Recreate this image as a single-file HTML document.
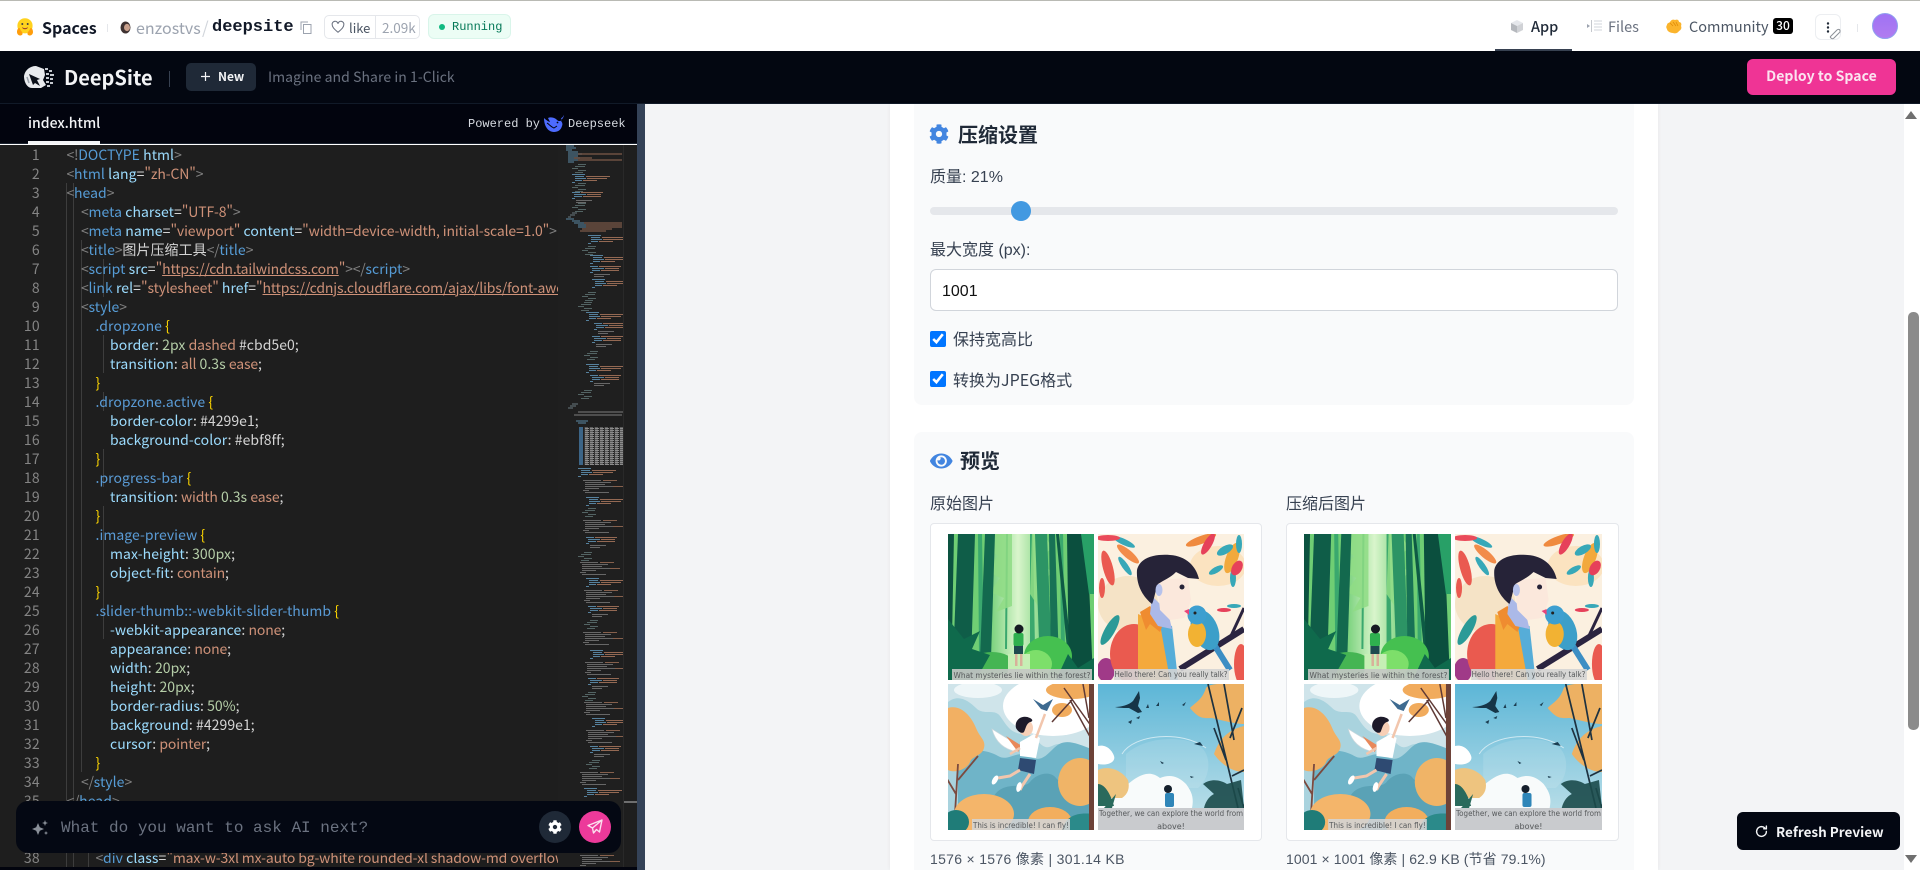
<!DOCTYPE html>
<html lang="zh-CN">
<head>
<meta charset="utf-8">
<title>DeepSite</title>
<style>
*{box-sizing:border-box}
html,body{margin:0;padding:0;width:1920px;height:870px;overflow:hidden;background:#fff}
body{font-family:"Noto Sans CJK SC","Liberation Sans",sans-serif;position:relative}
.a{position:absolute}
.t{position:absolute;white-space:pre}
.m{font-family:"Liberation Mono","DejaVu Sans Mono",monospace}
.cn{font-family:"Liberation Sans","Noto Sans CJK SC",sans-serif}
#code{position:absolute;left:66.5px;top:145.5px;width:491.5px;height:721.5px;overflow:hidden;font:14px/19px "Noto Sans CJK SC","Liberation Sans",sans-serif;color:#d4d4d4;letter-spacing:.05px}
#code div{height:19px;white-space:pre}
.i1{padding-left:14.5px}.i2{padding-left:29px}.i3{padding-left:43.5px}
.p{color:#808080;letter-spacing:-.3px}.g{color:#569cd6}.r{color:#9cdcfe}.s{color:#ce9178;letter-spacing:-.15px}.u{color:#ce9178;text-decoration:underline}
.c{color:#5a9bd5}.b{color:#ffd700}.n{color:#b5cea8}
#nums{position:absolute;left:0;top:145.5px;width:40px;height:721.5px;overflow:hidden;text-align:right;font:14px/19px "Noto Sans CJK SC","Liberation Sans",sans-serif;color:#858585;letter-spacing:.3px}
</style>
</head>
<body>
<!-- top bar -->
<div class="a" style="left:0;top:0;width:1920px;height:51px;background:#fff;border-top:1px solid #b9bab4"></div>
<svg class="a" style="left:16px;top:18px" width="18" height="18" viewBox="0 0 18 18"><circle cx="9" cy="7.800" r="7.600" fill="#ffd21e"/><path d="M1 14c0-2 1-4 2-4s1 1 1.500 2 1.500 1.500 2 3-1 2.500-2.500 2.500S1 16 1 14zM17 14c0-2-1-4-2-4s-1 1-1.500 2-1.500 1.500-2 3 1 2.500 2.500 2.500 3-1.500 3-3.500z" fill="#ff9d0b"/><circle cx="6.300" cy="6" r="1" fill="#3a3b45"/><circle cx="11.700" cy="6" r="1" fill="#3a3b45"/><path d="M6 9c1.800 1.500 4.200 1.500 6 0-.5 3-5.500 3-6 0z" fill="#a0402a"/></svg>
<div class="t" style="left:42px;top:15px;font-size:16px;line-height:24px;font-weight:700;color:#111827">Spaces</div>
<div class="a" style="left:107px;top:24px;width:1px;height:8px;background:#e5e7eb"></div>
<svg class="a" style="left:120px;top:21px" width="11" height="13" viewBox="0 0 11 13"><ellipse cx="5.500" cy="6.500" rx="5" ry="6" fill="#3f3231"/><ellipse cx="7" cy="6.500" rx="3" ry="3.600" fill="#c9a08c"/></svg>
<div class="t" style="left:136px;top:14px;font-size:16px;line-height:26px;color:#9ca3af">enzostvs</div>
<div class="t" style="left:202px;top:14px;font-size:17px;line-height:26px;color:#d1d5db">/</div>
<div class="t m" style="left:212px;top:15px;font-size:17px;line-height:26px;font-weight:700;color:#111827">deepsite</div>
<svg class="a" style="left:300px;top:21px" width="12" height="13" viewBox="0 0 12 13" fill="none" stroke="#9ca3af" stroke-width="1"><path d="M1 9V1h7"/><rect x="3.500" y="3.500" width="7.500" height="9" fill="#fff"/></svg>
<div class="a" style="left:324px;top:15px;width:96px;height:24px;border:1px solid #e5e7eb;border-radius:5px"></div>
<div class="a" style="left:375px;top:15px;width:1px;height:24px;background:#e5e7eb"></div>
<svg class="a" style="left:331px;top:20px" width="14" height="14" viewBox="0 0 24 24" fill="none" stroke="#6b7280" stroke-width="1.800"><path d="M12 21C5 15 2 12 2 8a5 5 0 0 1 10-1.500A5 5 0 0 1 22 8c0 4-3 7-10 13z"/></svg>
<div class="t" style="left:349px;top:17px;font-size:13px;line-height:21px;color:#4b5563">like</div>
<div class="t" style="left:382px;top:17px;font-size:13.500px;line-height:21px;color:#9ca3af">2.09k</div>
<div class="a" style="left:428px;top:14px;width:83px;height:25px;background:#ecfdf5;border:1px solid #d9f5ea;border-radius:6px"></div>
<div class="a" style="left:439px;top:24px;width:6px;height:6px;border-radius:50%;background:#10b981"></div>
<div class="t m" style="left:452px;top:19px;font-size:12px;line-height:16px;color:#047857">Running</div>

<svg class="a" style="left:1510px;top:19px" width="14" height="15" viewBox="0 0 14 15"><path d="M7 1l6 3-6 3-6-3z" fill="#e5e7eb"/><path d="M1 4l6 3v7l-6-3z" fill="#b5b8bd"/><path d="M13 4l-6 3v7l6-3z" fill="#d0d2d6"/></svg>
<div class="t" style="left:1531px;top:15px;font-size:14.500px;line-height:24px;font-weight:500;color:#1f2937">App</div>
<div class="a" style="left:1495px;top:49px;width:77px;height:2px;background:#374151"></div>
<svg class="a" style="left:1587px;top:20px" width="15" height="12" viewBox="0 0 15 12"><path d="M0 4l3 2-3 2z" fill="#9ca3af"/><path d="M4.500 0v12" stroke="#c5c8cd" stroke-width="1"/><path d="M7 1h8M7 4h8M7 7h8M7 10h8" stroke="#d1d5db" stroke-width="1"/></svg>
<div class="t" style="left:1608px;top:15px;font-size:14.500px;line-height:24px;color:#6b7280">Files</div>
<svg class="a" style="left:1666px;top:19px" width="16" height="15" viewBox="0 0 16 15"><path d="M1 6c0-2 2-2 3-3 1-2 3-3 5-2 2-1 4 0 4 2 2 0 3 2 2 4 1 2 0 4-2 5-1 2-4 3-6 2-3 0-6-2-6-4-1-1-1-3 0-4z" fill="#fbb42c"/><path d="M4 4l3 3M7 3l3 4M10 3l2 4" stroke="#e08c0a" stroke-width=".8"/></svg>
<div class="t" style="left:1689px;top:15px;font-size:14.500px;line-height:24px;color:#4b5563">Community</div>
<div class="t" style="left:1773px;top:18px;width:20px;height:16px;background:#000;border-radius:3px;color:#fff;font-size:12px;line-height:16px;text-align:center;font-weight:500">30</div>
<div class="a" style="left:1815px;top:14px;width:26px;height:26px;border:1px solid #eceef1;border-radius:6px;background:#fff"></div>
<svg class="a" style="left:1826px;top:22px" width="4" height="11" viewBox="0 0 4 11"><circle cx="2" cy="1.500" r="1.200" fill="#1f2937"/><circle cx="2" cy="5.500" r="1.200" fill="#1f2937"/><circle cx="2" cy="9.500" r="1.200" fill="#1f2937"/></svg>
<svg class="a" style="left:1829px;top:28px" width="13" height="13" viewBox="0 0 13 13" fill="#fff" stroke="#8b9097" stroke-width="1"><path d="M2 8l6-6c1-1 3-1 3 1s0 1-1 2l-5 5c-1 1-2 1-3 0s-1-1 0-2l5-5"/></svg>
<div class="a" style="left:1857px;top:24px;width:1px;height:8px;background:#e5e7eb"></div>
<div class="a" style="left:1872px;top:13px;width:26px;height:26px;border-radius:50%;background:linear-gradient(180deg,#9f72f4,#b07cf0);border:1px solid #8fa0ee"></div>

<!-- dark header -->
<div class="a" style="left:0;top:51px;width:1920px;height:53px;background:#030711;border-bottom:1px solid #111a28"></div>
<svg class="a" style="left:23px;top:64px" width="33" height="25" viewBox="0 0 33 25"><path d="M1 12C2 6 7 2 13 2l8 3 1 6-2 5 3 5-5 3H9C4 24 1 18 1 12z" fill="#e8eaed"/><path d="M6 10l11 5-3 1 3 6-5-3-2 2z" fill="#0b0f19"/><path d="M4 13l2 6" stroke="#9aa1ab" stroke-width="1.500"/><path d="M22 4h3v2h-3zM26 6h3v2h-3zM23 9h3v2h-3zM27 10h4v2h-4zM23 13h3v2h-3zM27 14h3v2h-3zM23 17h3v2h-3zM27 18h3v2h-3zM24 21h3v2h-3z" fill="#c5c9cf"/></svg>
<div class="t" style="left:64px;top:62px;font-size:20px;line-height:30px;font-weight:700;color:#f3f4f6">DeepSite</div>
<div class="a" style="left:169px;top:71px;width:1px;height:16px;background:#374151"></div>
<div class="a" style="left:186px;top:63px;width:70px;height:28px;background:#1f2937;border-radius:5px"></div>
<svg class="a" style="left:200px;top:71px" width="11" height="11" viewBox="0 0 11 11"><path d="M5.500 1v9M1 5.500h9" stroke="#f3f4f6" stroke-width="1.200"/></svg>
<div class="t" style="left:218px;top:67px;font-size:12px;line-height:20px;font-weight:700;color:#f3f4f6">New</div>
<div class="t" style="left:268px;top:66px;font-size:14px;line-height:22px;color:#6b7280;letter-spacing:.06px">Imagine and Share in 1-Click</div>
<div class="a" style="left:1747px;top:59px;width:149px;height:36px;background:#ef3495;border-radius:6px"></div>
<div class="t" style="left:1747px;top:59px;width:149px;text-align:center;font-size:14px;line-height:35px;font-weight:700;color:#fbe4f0;letter-spacing:.05px">Deploy to Space</div>

<!-- editor -->
<div class="a" style="left:0;top:104px;width:637px;height:40px;background:#02040e;border-bottom:1px solid #1c2430"></div>
<div class="t" style="left:28px;top:113px;font-size:14px;line-height:21px;font-weight:500;color:#f3f4f6">index.html</div>
<div class="a" style="left:28px;top:141px;width:72px;height:3px;background:#f3f4f6"></div>
<div class="t m" style="left:468px;top:117px;font-size:12px;line-height:14px;color:#d8dce2">Powered by</div>
<svg class="a" style="left:544px;top:115px" width="20" height="17" viewBox="0 0 20 17"><path d="M20 0c-1 2-2 3-3 3l1 2c-1 1-2 1-3 1-1 0-2-1-3-2C9 2 6 2 4 3L6 7C5 7 2 5 0 3c0 8 4 14 10 14 4 0 7-2 8-6 1-2 0-4-1-5 1-2 3-4 3-6z" fill="#4d6bfe"/><path d="M3 8c2 1 4 4 7 5l3-2" stroke="#02040e" stroke-width="1" fill="none"/><circle cx="13.500" cy="7.500" r=".9" fill="#02040e"/></svg>
<div class="t m" style="left:568px;top:117px;font-size:12px;line-height:14px;color:#d8dce2">Deepseek</div>

<div class="a" style="left:0;top:145px;width:637px;height:722px;background:#1e1e1e"></div>
<div class="a" style="left:0;top:867px;width:645px;height:3px;background:#02040e"></div>
<div class="a" style="left:558px;top:145px;width:65px;height:722px;background:#1f1f1f"></div>
<div class="a" style="left:623px;top:145px;width:1px;height:722px;background:#292929"></div>
<div class="a" style="left:624px;top:801px;width:13px;height:2px;background:#6e6e6e"></div>
<div class="a" style="left:637px;top:104px;width:8px;height:766px;background:#344257"></div>

<!-- indent guides -->
<svg class="a" style="left:0;top:145px" width="120" height="722" viewBox="0 145 120 722" stroke="#3d3d3d" stroke-width="1" shape-rendering="crispEdges">
<path d="M66.500 183V867M73.500 183V867M81.500 240V772M103.500 259V297M103.500 335V373M103.500 392V411M103.500 449V487M103.500 506V639M88.500 830V867"/>
</svg>

<div id="nums">1
<br>2<br>3<br>4<br>5<br>6<br>7<br>8<br>9<br>10<br>11<br>12<br>13<br>14<br>15<br>16<br>17<br>18<br>19<br>20<br>21<br>22<br>23<br>24<br>25<br>26<br>27<br>28<br>29<br>30<br>31<br>32<br>33<br>34<br>35<br>36<br>37<br>38</div>

<div id="code">
<div><span class="p">&lt;!</span><span class="g">DOCTYPE</span> <span class="r">html</span><span class="p">&gt;</span></div>
<div><span class="p">&lt;</span><span class="g">html</span> <span class="r">lang</span>=<span class="s">"zh-CN"</span><span class="p">&gt;</span></div>
<div><span class="p">&lt;</span><span class="g">head</span><span class="p">&gt;</span></div>
<div class="i1"><span class="p">&lt;</span><span class="g">meta</span> <span class="r">charset</span>=<span class="s">"UTF-8"</span><span class="p">&gt;</span></div>
<div class="i1"><span class="p">&lt;</span><span class="g">meta</span> <span class="r">name</span>=<span class="s">"viewport"</span> <span class="r">content</span>=<span class="s">"width=device-width, initial-scale=1.0"</span><span class="p">&gt;</span></div>
<div class="i1"><span class="p">&lt;</span><span class="g">title</span><span class="p">&gt;</span>图片压缩工具<span class="p">&lt;/</span><span class="g">title</span><span class="p">&gt;</span></div>
<div class="i1"><span class="p">&lt;</span><span class="g">script</span> <span class="r">src</span>=<span class="s">"<span class="u">https://cdn.tailwindcss.com</span>"</span><span class="p">&gt;&lt;/</span><span class="g">script</span><span class="p">&gt;</span></div>
<div class="i1"><span class="p">&lt;</span><span class="g">link</span> <span class="r">rel</span>=<span class="s">"stylesheet"</span> <span class="r">href</span>=<span class="s">"<span class="u">https://cdnjs.cloudflare.com/ajax/libs/font-awesome/6.4.0/css/all.min.css</span>"</span><span class="p">&gt;</span></div>
<div class="i1"><span class="p">&lt;</span><span class="g">style</span><span class="p">&gt;</span></div>
<div class="i2"><span class="c">.dropzone</span> <span class="b">{</span></div>
<div class="i3"><span class="r">border</span>: <span class="n">2px</span> <span class="s">dashed</span> #cbd5e0;</div>
<div class="i3"><span class="r">transition</span>: <span class="s">all</span> <span class="n">0.3s</span> <span class="s">ease</span>;</div>
<div class="i2"><span class="b">}</span></div>
<div class="i2"><span class="c">.dropzone.active</span> <span class="b">{</span></div>
<div class="i3"><span class="r">border-color</span>: #4299e1;</div>
<div class="i3"><span class="r">background-color</span>: #ebf8ff;</div>
<div class="i2"><span class="b">}</span></div>
<div class="i2"><span class="c">.progress-bar</span> <span class="b">{</span></div>
<div class="i3"><span class="r">transition</span>: <span class="s">width</span> <span class="n">0.3s</span> <span class="s">ease</span>;</div>
<div class="i2"><span class="b">}</span></div>
<div class="i2"><span class="c">.image-preview</span> <span class="b">{</span></div>
<div class="i3"><span class="r">max-height</span>: <span class="n">300px</span>;</div>
<div class="i3"><span class="r">object-fit</span>: <span class="s">contain</span>;</div>
<div class="i2"><span class="b">}</span></div>
<div class="i2"><span class="c">.slider-thumb::-webkit-slider-thumb</span> <span class="b">{</span></div>
<div class="i3"><span class="r">-webkit-appearance</span>: <span class="s">none</span>;</div>
<div class="i3"><span class="r">appearance</span>: <span class="s">none</span>;</div>
<div class="i3"><span class="r">width</span>: <span class="n">20px</span>;</div>
<div class="i3"><span class="r">height</span>: <span class="n">20px</span>;</div>
<div class="i3"><span class="r">border-radius</span>: <span class="n">50%</span>;</div>
<div class="i3"><span class="r">background</span>: #4299e1;</div>
<div class="i3"><span class="r">cursor</span>: <span class="s">pointer</span>;</div>
<div class="i2"><span class="b">}</span></div>
<div class="i1"><span class="p">&lt;/</span><span class="g">style</span><span class="p">&gt;</span></div>
<div><span class="p">&lt;/</span><span class="g">head</span><span class="p">&gt;</span></div>
<div><span class="p">&lt;</span><span class="g">body</span> <span class="r">class</span>=<span class="s">"bg-gray-100 min-h-screen"</span><span class="p">&gt;</span></div>
<div class="i1"><span class="p">&lt;</span><span class="g">div</span> <span class="r">class</span>=<span class="s">"container mx-auto px-4 py-8"</span><span class="p">&gt;</span></div>
<div class="i2"><span class="p">&lt;</span><span class="g">div</span> <span class="r">class</span>=<span class="s">"max-w-3xl mx-auto bg-white rounded-xl shadow-md overflow-hidden"</span><span class="p">&gt;</span></div>
</div>

<!-- minimap -->
<svg class="a" style="left:559px;top:145px" width="64" height="722" viewBox="559 145 64 722" fill="none">
<defs>
<pattern id="dn" width="5" height="2" patternUnits="userSpaceOnUse"><rect width="4" height="1" fill="#8c8c8c"/><rect x="4" width="1" height="2" fill="#333"/><rect y="1" width="3" height="1" fill="#5c5c5c"/></pattern>
<g id="b1"><path d="M0 .5h13M3 2.500h9M3 4.500h11M3 6.500h7M0 8.500h3" stroke="#6aa3c8" stroke-opacity=".75"/><path d="M14 2.500h24M15 4.500h20M11 6.500h14" stroke="#b27c60" stroke-opacity=".8"/></g>
<g id="b2"><path d="M0 .5h8M2 2.500h12M2 4.500h8M0 6.500h3" stroke="#6aa3c8" stroke-opacity=".75"/><path d="M9 .5h22M15 2.500h14M11 4.500h18" stroke="#b27c60" stroke-opacity=".8"/><path d="M4 8.500h16M4 10.500h10" stroke="#9a9a9a" stroke-opacity=".6"/></g>
<g id="b3"><path d="M6 .5h8M3 2.500h10M0 4.500h6M6 6.500h8M3 8.500h8" stroke="#8aa" stroke-opacity=".5"/></g>
<g id="b4"><path d="M0 .5h18M2 2.500h26M2 4.500h20M2 6.500h28M2 8.500h14M0 10.500h6M2 12.500h24" stroke="#a2a2a2" stroke-opacity=".55"/><path d="M20 .5h14M30 6.500h10" stroke="#b27c60" stroke-opacity=".7"/></g>
</defs>
<path d="M566 146h8M566 148h10M566 150h6M568 152h10M568 154h14M568 156h10M568 158h12M568 160h10M568 162h6" stroke="#6aa3c8" stroke-opacity=".8"/>
<path d="M578 154h44M574 158h18M578 160h44" stroke="#b27c60" stroke-opacity=".8"/>
<use href="#b3" x="572" y="164"/><use href="#b1" x="572" y="174"/><use href="#b3" x="572" y="183"/><use href="#b2" x="572" y="192"/><use href="#b3" x="572" y="203"/>
<path d="M572 213h5M570 215h5M568 217h3" stroke="#8a9ea8" stroke-opacity=".7"/>
<path d="M566 219h8M572 221h8M574 223h10M578 225h8M578 227h8" stroke="#6aa3c8" stroke-opacity=".8"/>
<path d="M584 223h38M586 225h36M586 227h36M582 229h30M580 231h26" stroke="#b27c60" stroke-opacity=".8"/>
<use href="#b1" x="588" y="235"/><use href="#b3" x="582" y="246"/><use href="#b1" x="590" y="255"/><use href="#b2" x="590" y="266"/><use href="#b1" x="592" y="279"/><use href="#b3" x="582" y="292"/><use href="#b3" x="578" y="302"/><use href="#b1" x="586" y="312"/><use href="#b2" x="594" y="323"/><use href="#b2" x="592" y="336"/><use href="#b3" x="584" y="351"/><use href="#b1" x="586" y="364"/><use href="#b2" x="590" y="375"/><use href="#b3" x="578" y="390"/>
<path d="M572 404h6M570 406h6M568 408h5" stroke="#8a9ea8" stroke-opacity=".7"/>
<path d="M578 412h45M574 415h48" stroke="#a6a6a6" stroke-opacity=".7"/>
<path d="M576 421h12M578 423h8" stroke="#6aa3c8" stroke-opacity=".8"/>
<rect x="579" y="427" width="4" height="38" fill="#3c6587"/>
<rect x="584" y="427" width="39" height="38" fill="url(#dn)"/>
<use href="#b1" x="578" y="468"/><use href="#b4" x="583" y="480"/><use href="#b1" x="586" y="497"/><use href="#b3" x="582" y="508"/><use href="#b4" x="583" y="520"/><use href="#b2" x="586" y="537"/><use href="#b3" x="578" y="552"/><use href="#b4" x="580" y="562"/><use href="#b1" x="586" y="578"/><use href="#b4" x="584" y="590"/><use href="#b2" x="588" y="606"/><use href="#b3" x="584" y="620"/><use href="#b4" x="583" y="632"/><use href="#b1" x="590" y="650"/><use href="#b4" x="585" y="662"/><use href="#b2" x="588" y="678"/><use href="#b3" x="582" y="692"/><use href="#b4" x="584" y="702"/><use href="#b1" x="592" y="718"/><use href="#b4" x="586" y="730"/><use href="#b2" x="590" y="746"/><use href="#b3" x="586" y="760"/><use href="#b4" x="580" y="772"/><use href="#b1" x="584" y="788"/><use href="#b4" x="580" y="855"/>
</svg>

<!-- chat box -->
<div class="a" style="left:16px;top:801px;width:605px;height:52px;background:#040813;border-radius:12px"></div>
<svg class="a" style="left:32px;top:820px" width="17" height="17" viewBox="0 0 17 17"><path d="M6 3l1.800 4.200L12 9l-4.200 1.800L6 15l-1.800-4.200L0 9l4.200-1.800z" fill="#8a9099"/><path d="M13 0l.8 2.200L16 3l-2.200.8L13 6l-.8-2.200L10 3l2.200-.8zM14 11l.6 1.400L16 13l-1.400.6L14 15l-.6-1.400L12 13l1.400-.6z" fill="#8a9099"/></svg>
<div class="t m" style="left:61px;top:818px;font-size:16px;line-height:21px;color:#6b7280">What do you want to ask AI next?</div>
<div class="a" style="left:539px;top:811px;width:32px;height:32px;border-radius:50%;background:#1f2937"></div>
<svg class="a" style="left:548px;top:820px" width="14" height="14" viewBox="0 0 512 512"><path fill="#fff" d="M487.400 315.700l-42.600-24.600c4.300-23.200 4.300-47 0-70.200l42.600-24.600c4.900-2.800 7.100-8.600 5.500-14-11.100-35.600-30-67.800-54.700-94.600-3.800-4.100-10-5.100-14.800-2.300L380.800 110c-17.900-15.400-38.500-27.300-60.800-35.100V25.800c0-5.600-3.900-10.500-9.400-11.700-36.700-8.200-74.300-7.800-109.200 0-5.500 1.200-9.400 6.100-9.400 11.700V75c-22.200 7.900-42.800 19.800-60.800 35.100L88.700 85.500c-4.900-2.800-11-1.900-14.800 2.300-24.700 26.700-43.600 58.900-54.700 94.600-1.700 5.400.6 11.200 5.500 14L67.300 221c-4.300 23.200-4.300 47 0 70.200l-42.600 24.600c-4.900 2.800-7.100 8.600-5.500 14 11.100 35.600 30 67.800 54.700 94.600 3.800 4.100 10 5.100 14.800 2.300l42.600-24.600c17.900 15.400 38.500 27.300 60.800 35.100v49.200c0 5.600 3.900 10.500 9.400 11.700 36.700 8.200 74.300 7.800 109.200 0 5.500-1.200 9.400-6.100 9.400-11.700v-49.200c22.200-7.900 42.800-19.800 60.800-35.100l42.600 24.600c4.900 2.800 11 1.900 14.800-2.300 24.700-26.700 43.600-58.900 54.700-94.600 1.500-5.500-.7-11.300-5.600-14.100zM256 336c-44.100 0-80-35.900-80-80s35.900-80 80-80 80 35.900 80 80-35.900 80-80 80z"/></svg>
<div class="a" style="left:579px;top:811px;width:32px;height:32px;border-radius:50%;background:#ec3a9a"></div>
<svg class="a" style="left:587px;top:819px" width="16" height="16" viewBox="0 0 16 16" fill="none" stroke="#fbe0ee" stroke-width="1.400" stroke-linejoin="round"><path d="M15 1L1 6.500 5.500 9 6.500 14 9.500 10.500 12.500 13zM15 1L5.500 9"/></svg>

<!-- preview -->
<div class="a" style="left:645px;top:104px;width:1259px;height:766px;background:#f3f4f6"></div>
<div class="a" style="left:890px;top:104px;width:768px;height:766px;background:#fff;box-shadow:0 0 4px rgba(0,0,0,.06)"></div>
<div class="a" style="left:914px;top:104px;width:720px;height:301px;background:#f9fafb;border-radius:0 0 8px 8px"></div>
<svg class="a" style="left:929px;top:124px" width="20" height="20" viewBox="0 0 512 512"><path fill="#4285e0" d="M487.400 315.700l-42.600-24.600c4.300-23.200 4.300-47 0-70.200l42.600-24.600c4.900-2.800 7.100-8.600 5.500-14-11.100-35.600-30-67.800-54.700-94.600-3.800-4.100-10-5.100-14.800-2.300L380.800 110c-17.900-15.400-38.500-27.300-60.800-35.100V25.800c0-5.600-3.900-10.500-9.400-11.700-36.700-8.200-74.300-7.800-109.200 0-5.500 1.200-9.400 6.100-9.400 11.700V75c-22.200 7.900-42.800 19.800-60.800 35.100L88.700 85.500c-4.900-2.800-11-1.900-14.800 2.300-24.700 26.700-43.600 58.900-54.700 94.600-1.700 5.400.6 11.200 5.500 14L67.300 221c-4.300 23.200-4.300 47 0 70.200l-42.600 24.600c-4.900 2.800-7.100 8.600-5.500 14 11.100 35.600 30 67.800 54.700 94.600 3.800 4.100 10 5.100 14.800 2.300l42.600-24.600c17.900 15.400 38.500 27.300 60.800 35.100v49.200c0 5.600 3.900 10.500 9.400 11.700 36.700 8.200 74.300 7.800 109.200 0 5.500-1.200 9.400-6.100 9.400-11.700v-49.200c22.200-7.900 42.800-19.800 60.800-35.100l42.600 24.600c4.900 2.800 11 1.900 14.800-2.300 24.700-26.700 43.600-58.900 54.700-94.600 1.500-5.500-.7-11.300-5.600-14.100zM256 336c-44.100 0-80-35.900-80-80s35.900-80 80-80 80 35.900 80 80-35.900 80-80 80z"/></svg>
<div class="t cn" style="left:958px;top:121px;font-size:20px;line-height:30px;font-weight:700;color:#1f2937">压缩设置</div>
<div class="t cn" style="left:930px;top:166px;font-size:16px;line-height:24px;color:#374151">质量: 21%</div>
<div class="a" style="left:930px;top:207px;width:688px;height:8px;background:#e5e7eb;border-radius:4px"></div>
<div class="a" style="left:1011px;top:201px;width:20px;height:20px;background:#4299e1;border-radius:50%"></div>
<div class="t cn" style="left:930px;top:239px;font-size:16px;line-height:24px;color:#374151">最大宽度 (px):</div>
<div class="a" style="left:930px;top:269px;width:688px;height:42px;background:#fff;border:1px solid #d1d5db;border-radius:6px"></div>
<div class="t cn" style="left:942px;top:280px;font-size:16px;line-height:24px;color:#111">1001</div>
<input class="a" type="checkbox" checked style="left:930px;top:331px;width:16px;height:16px;margin:0">
<div class="t cn" style="left:953px;top:328.500px;font-size:16px;line-height:24px;color:#374151">保持宽高比</div>
<input class="a" type="checkbox" checked style="left:930px;top:371px;width:16px;height:16px;margin:0">
<div class="t cn" style="left:953px;top:366.500px;font-size:16px;line-height:24px;color:#374151">转换为<span style="font-family:'Noto Sans CJK SC',sans-serif">JPEG</span>格式</div>

<div class="a" style="left:914px;top:432px;width:720px;height:438px;background:#f9fafb;border-radius:8px 8px 0 0"></div>
<svg class="a" style="left:930px;top:451px" width="22.500" height="20" viewBox="0 0 576 512"><path fill="#4285e0" d="M572.520 241.400C518.290 135.590 410.930 64 288 64S57.680 135.640 3.480 241.410a32.350 32.350 0 0 0 0 29.190C57.710 376.410 165.070 448 288 448s230.320-71.640 284.520-177.410a32.350 32.350 0 0 0 0-29.190zM288 400a144 144 0 1 1 144-144 143.930 143.930 0 0 1-144 144zm0-240a95.310 95.310 0 0 0-25.310 3.790 47.850 47.850 0 0 1-66.900 66.900A95.780 95.780 0 1 0 288 160z"/></svg>
<div class="t cn" style="left:960px;top:447px;font-size:20px;line-height:30px;font-weight:700;color:#1f2937">预览</div>
<div class="t cn" style="left:930px;top:493px;font-size:16px;line-height:24px;color:#374151">原始图片</div>
<div class="t cn" style="left:1286px;top:493px;font-size:16px;line-height:24px;color:#374151">压缩后图片</div>
<div class="a" style="left:930px;top:523px;width:332px;height:318px;background:#fff;border:1px solid #e5e7eb;border-radius:4px"></div>
<div class="a" style="left:1286px;top:523px;width:333px;height:318px;background:#fff;border:1px solid #e5e7eb;border-radius:4px"></div>

<svg width="0" height="0" style="position:absolute">
<defs>
<linearGradient id="g1" x1="0" x2="1" y1="0" y2="0"><stop offset="0" stop-color="#6fce74"/><stop offset=".5" stop-color="#d9f5cc"/><stop offset="1" stop-color="#6fce74"/></linearGradient>
<linearGradient id="g4" x1="0" x2="0" y1="0" y2="1"><stop offset="0" stop-color="#5cb6d7"/><stop offset="1" stop-color="#c5e3ea"/></linearGradient>
<clipPath id="ct"><rect width="146" height="146"/></clipPath>
<symbol id="art" viewBox="0 0 296 296">
<!-- tile 1 forest -->
<g clip-path="url(#ct)">
<rect width="146" height="146" fill="#6fce74"/>
<rect x="40" width="60" height="146" fill="url(#g1)"/>
<path d="M18 0h6l-2 120h-5zM30 0h4l2 120h-5zM58 0h2l-1 115h-2zM82 0h3l2 115h-5zM112 0h3l2 115h-4z" fill="#3aa86e"/>
<path d="M46 0l-8 14 12 8-12 14 14 8-10 14 14 6-8 14 16-6V0zM96 0l8 14-14 12 14 12-12 14 10 10-12 10-8-12 2-60z" fill="#8fdc85" opacity=".85"/>
<path d="M87 0h12l5 132H92z" fill="#2c9465"/>
<path d="M37 0h10l-4 124H32z" fill="#13694e"/>
<path d="M101 0h6l4 132h-8z" fill="#187255"/>
<path d="M108 0h3l13 125h-4z" fill="#0e5a45"/>
<path d="M10 0h17l-4 130H5z" fill="#0f5d48"/>
<path d="M0 0h6L4 105H0z" fill="#0c5240"/>
<path d="M119 0h20l6 146h-24z" fill="#0b4f3e"/>
<path d="M128 0h5l8 60h13V0z" fill="#28a067"/>
<ellipse cx="100" cy="122" rx="24" ry="20" fill="#45c050"/>
<ellipse cx="88" cy="130" rx="16" ry="14" fill="#7ddf6a"/>
<ellipse cx="44" cy="130" rx="22" ry="12" fill="#45b553"/>
<rect x="60" y="120" width="22" height="26" fill="#c6efb5"/>
<path d="M0 85l16 20 16-8-8 18 18 6-14 25H0z" fill="#0f6a4c"/>
<path d="M108 146l12-26 10 14 16-10v22z" fill="#0f6a4c"/>
<rect x="67" y="116" width="2.500" height="16" fill="#d8b09a"/><rect x="72" y="116" width="2.500" height="16" fill="#d8b09a"/>
<rect x="66" y="111" width="9" height="9" fill="#1e4a4f"/>
<rect x="65.500" y="99" width="10" height="13" rx="2" fill="#2fb04f"/>
<circle cx="71" cy="95" r="4.500" fill="#161a22"/>
<rect x="4" y="135" width="140" height="11" fill="#c4c8c4" opacity=".92"/>
</g>
<!-- tile 2 boy and bird -->
<g transform="translate(150)" clip-path="url(#ct)">
<rect width="146" height="146" fill="#fbf0e0"/>
<ellipse cx="30" cy="70" rx="30" ry="28" fill="#f5e3c6"/>
<ellipse cx="120" cy="32" rx="28" ry="20" fill="#fbe3c0"/>
<g>
<ellipse cx="10" cy="34" rx="5" ry="18" transform="rotate(-15 10 34)" fill="#ea5a50"/>
<ellipse cx="30" cy="20" rx="4" ry="14" transform="rotate(-50 30 20)" fill="#f28c4a"/>
<ellipse cx="26" cy="8" rx="3" ry="12" transform="rotate(-65 26 8)" fill="#37a8b8"/>
<ellipse cx="10" cy="4" rx="12" ry="3" fill="#ea4b5a"/>
<ellipse cx="27" cy="32" rx="3" ry="11" transform="rotate(-35 27 32)" fill="#37a8b8"/>
<ellipse cx="4" cy="54" rx="3" ry="10" fill="#ea5a50"/>
<ellipse cx="103" cy="6" rx="16" ry="4" transform="rotate(-20 103 6)" fill="#ef8a3f"/>
<ellipse cx="110" cy="10" rx="4" ry="12" transform="rotate(30 110 10)" fill="#e6415a"/>
<ellipse cx="134" cy="24" rx="6" ry="16" transform="rotate(20 134 24)" fill="#f2a93c"/>
<ellipse cx="127" cy="16" rx="4" ry="9" transform="rotate(60 127 16)" fill="#37a8b8"/>
<ellipse cx="141" cy="10" rx="3" ry="9" fill="#37a8b8"/>
<ellipse cx="118" cy="36" rx="3" ry="8" transform="rotate(60 118 36)" fill="#37a8b8"/>
<ellipse cx="135" cy="44" rx="3" ry="9" fill="#37a8b8"/>
<ellipse cx="139" cy="34" rx="5" ry="8" transform="rotate(30 139 34)" fill="#e6415a"/>
<ellipse cx="126" cy="76" rx="7" ry="2" fill="#e6415a"/>
<ellipse cx="136" cy="72" rx="7" ry="2" fill="#37a8b8"/>
<ellipse cx="12" cy="96" rx="5" ry="17" transform="rotate(30 12 96)" fill="#2b9a97"/>
<ellipse cx="24" cy="114" rx="4" ry="13" transform="rotate(60 24 114)" fill="#2b9a97"/>
<ellipse cx="8" cy="136" rx="9" ry="12" fill="#a03a88"/>
<ellipse cx="143" cy="130" rx="7" ry="20" fill="#ea5a50"/>
</g>
<ellipse cx="36" cy="120" rx="24" ry="30" fill="#ea5a4f"/>
<path d="M40 80l30 14 8 52H40z" fill="#f4a93c"/>
<path d="M62 90l12 2 6 54H72z" fill="#56add8"/>
<path d="M42 78l10-6 14 16-4 10-10-8-4 6z" fill="#ef8c30"/>
<path d="M54 62l16 16 4 17-14-3-8-12z" fill="#abb9e8"/>
<path d="M59 46l31-2c1 8 2 14 3 22l-2 6-1 6-4 6-14 2-10-10z" fill="#fbe8dc"/>
<path d="M39 36c3-14 21-16 33-15 16 1 26 11 29 24l-11-1-12-6c-6 6-12 8-18 12-3 8-4 16-6 20C44 62 38 50 39 36z" fill="#262338"/>
<ellipse cx="61" cy="56" rx="3.500" ry="6" fill="#b6c2ec"/>
<circle cx="84" cy="53" r="2.500" fill="#272338"/>
<path d="M82 135l64-40" stroke="#2b2440" stroke-width="6"/>
<path d="M132 104l14-30" stroke="#2b2440" stroke-width="3"/>
<path d="M112 104l20 32" stroke="#3c8ec4" stroke-width="6"/>
<ellipse cx="107" cy="96" rx="13" ry="21" transform="rotate(-22 107 96)" fill="#3c9fc9"/>
<ellipse cx="99" cy="100" rx="9" ry="13" fill="#f2b233"/>
<circle cx="99" cy="81" r="9.500" fill="#3d9fd0"/>
<path d="M91 75l-5 2 5 4z" fill="#e8447a"/>
<circle cx="97" cy="79" r="1.500" fill="#222"/>
<rect x="16" y="135" width="115" height="11" fill="#d4d4d4" opacity=".9"/>
</g>
<!-- tile 3 flying boy -->
<g transform="translate(0 150)" clip-path="url(#ct)">
<rect width="146" height="146" fill="#cfe4ea"/>
<ellipse cx="105" cy="22" rx="50" ry="30" fill="#fff"/>
<ellipse cx="30" cy="6" rx="24" ry="8" fill="#eef6f8"/>
<path d="M0 18c10-8 20-2 28 6s18 0 24 8 10 18 24 18 16 18 28 12 16 2 22 10 20 2 20 8v66H0z" fill="#a9d3de"/>
<path d="M10 76c10-14 30-10 40-4s18-6 30 0 16 2 26-8 20-6 40 2v80H10z" fill="#6fb4c8"/>
<path d="M46 112c10-16 30-6 36-14s20-12 26-4 20 2 38 0v52H46z" fill="#5aa2b6"/>
<path d="M0 24c14-4 24 10 28 20 4 10 10 12 8 20s-12 8-14 14-14 12-22 8z" fill="#f2b063"/>
<path d="M6 146L10 80M10 96L30 72M8 110L-4 90" stroke="#7b4a3f" stroke-width="1.800"/>
<ellipse cx="36" cy="130" rx="30" ry="20" fill="#f4b56a"/>
<ellipse cx="8" cy="138" rx="13" ry="12" fill="#1f7c78"/>
<ellipse cx="132" cy="98" rx="22" ry="24" fill="#f0b467"/>
<ellipse cx="102" cy="138" rx="22" ry="15" fill="#f2ae5e"/>
<path d="M114 146c4-14 14-18 32-16v16z" fill="#2b8a8a"/>
<ellipse cx="124" cy="6" rx="26" ry="9" fill="#f1ab5c"/>
<ellipse cx="114" cy="26" rx="10" ry="7" fill="#f1ab5c"/>
<path d="M116 4l30 42M135 0l6 34M104 38L124 16M122 16L146 60" stroke="#5f3a36" stroke-width="1.500"/>
<rect x="141" width="5" height="146" fill="#6d4238"/>
<path d="M44 45c6 4 16 10 28 17l-2 6c-12-2-22-8-26-23z" fill="#fff" stroke="#cfd8dc" stroke-width=".6"/>
<path d="M58 52l16 10-4 6z" fill="#e8885a"/>
<path d="M72 58l14-8 6 4-4 20-16-2z" fill="#fff"/>
<path d="M88 54l9-24" stroke="#f2c6ad" stroke-width="2.500"/>
<path d="M72 64l-10 6" stroke="#f2c6ad" stroke-width="2.500"/>
<path d="M72 74l16 2-2 14-16-4z" fill="#2e4a72"/>
<path d="M72 86l-10 6-12 2M82 90l-8 12-2 4" stroke="#f2c6ad" stroke-width="3" fill="none"/>
<ellipse cx="47" cy="96" rx="2.500" ry="5" transform="rotate(30 47 96)" fill="#fff"/>
<ellipse cx="71" cy="103" rx="2.500" ry="5" transform="rotate(15 71 103)" fill="#fff"/>
<ellipse cx="78" cy="44" rx="7" ry="8" fill="#f7cfb6"/>
<path d="M68 44c-2-8 6-14 14-10 4 2 2 4 0 4-4 2-4 6-6 10-2 2-6 0-8-4z" fill="#1d1a2a"/>
<path d="M85 15l10 6 10-6-6 12-6-2z" fill="#3d6a90"/>
<rect x="24" y="135" width="98" height="11" fill="#d4d4d4" opacity=".9"/>
</g>
<!-- tile 4 sky -->
<g transform="translate(150 150)" clip-path="url(#ct)">
<rect width="146" height="146" fill="url(#g4)"/>
<path d="M24 70C36 50 84 46 108 64" stroke="#fff" stroke-opacity=".6" stroke-width="1" fill="none"/>
<path d="M28 70c20-18 60-20 76-6 10 10 8 30-4 40H28z" fill="#fff" opacity=".12"/>
<path d="M0 62c8-2 14 4 16 10s-6 10-16 8z" fill="#fff"/>
<path d="M0 98c12-6 22-2 30 2 12-10 22-14 32-6 10-4 18-2 26 6 6 8 8 14 6 24H0z" fill="#f8fbfb"/>
<path d="M0 86c8-4 22-2 30 10 2 8 0 14-6 18H0z" fill="#eec47f"/>
<path d="M0 100c6 0 12 8 16 22H0zM6 124l12-14-4 14z" fill="#2a6a5c"/>
<path d="M92 24c6-6 12-8 16-20 4-6 24-4 38-4v40c-8 0-24-4-32-6-8 0-12 2-22-10z" fill="#edb163"/>
<path d="M116 70c4-12 12-24 30-28v46c-8 0-20-4-30-18z" fill="#edb163"/>
<path d="M110 0l30 124M126 0l10 56M144 24l-12 30M116 44l12 32M146 86l-12 6M140 104l6 20" stroke="#1e3240" stroke-width="1.700" fill="none"/>
<path d="M105 100c8-6 18-4 24 0l14-4 3 28H106c2-8 6-12 10-14z" fill="#1b4a4a" opacity=".9"/>
<path d="M17 23c6 0 14-2 18-6l6-10 1 7-2 8 4 6-4 1-9-5c-4 0-10 0-14-1z" fill="#163547"/>
<path d="M48 24l2-4 1 4zM58 22l3-4v4zM84 21l4-3-2 4zM30 38l4-2-1 4zM38 34l4-2-1 3zM96 60l6-2 3 4-5-1zM62 77l4 2-2 1zM92 92l4 1-3 1z" fill="#1c3d50"/>
<circle cx="70" cy="105" r="4" fill="#15202c"/>
<rect x="67" y="109" width="9" height="14" rx="2" fill="#2f86b8"/>
<rect x="0" y="124" width="146" height="22" fill="#c9cbce"/>
</g>
</symbol>
</defs>
</svg>

<svg class="a" style="left:948px;top:534px" width="296" height="296" viewBox="0 0 296 296">
<use href="#art" width="296" height="296"/>
<g font-family="DejaVu Sans,sans-serif" fill="#56595b" font-size="8" text-anchor="middle">
<text x="74" y="144" textLength="137" lengthAdjust="spacingAndGlyphs">What mysteries lie within the forest?</text>
<text x="223" y="143" textLength="113" lengthAdjust="spacingAndGlyphs">Hello there! Can you really talk?</text>
<text x="73" y="294" textLength="96" lengthAdjust="spacingAndGlyphs">This is incredible! I can fly!</text>
<text x="223" y="282" textLength="144" lengthAdjust="spacingAndGlyphs">Together, we can explore the world from</text>
<text x="223" y="295">above!</text>
</g>
</svg>
<svg class="a" style="left:1304px;top:534px" width="298" height="296" viewBox="0 0 296 296" preserveAspectRatio="none">
<use href="#art" width="296" height="296"/>
<g font-family="DejaVu Sans,sans-serif" fill="#56595b" font-size="8" text-anchor="middle">
<text x="74" y="144" textLength="137" lengthAdjust="spacingAndGlyphs">What mysteries lie within the forest?</text>
<text x="223" y="143" textLength="113" lengthAdjust="spacingAndGlyphs">Hello there! Can you really talk?</text>
<text x="73" y="294" textLength="96" lengthAdjust="spacingAndGlyphs">This is incredible! I can fly!</text>
<text x="223" y="282" textLength="144" lengthAdjust="spacingAndGlyphs">Together, we can explore the world from</text>
<text x="223" y="295">above!</text>
</g>
</svg>

<div class="t cn" style="left:930px;top:848px;font-size:14px;line-height:22px;color:#4b5563;letter-spacing:.3px">1576 × 1576 像素 | 301.14 KB</div>
<div class="t cn" style="left:1286px;top:848px;font-size:14px;line-height:22px;color:#4b5563;letter-spacing:.1px">1001 × 1001 像素 | 62.9 KB (节省 79.1%)</div>

<!-- refresh -->
<div class="a" style="left:1737px;top:812px;width:163px;height:38px;background:#030712;border-radius:6px"></div>
<svg class="a" style="left:1755px;top:825px" width="13" height="13" viewBox="0 0 24 24" fill="none" stroke="#f3f4f6" stroke-width="2.600" stroke-linecap="round"><path d="M21 12a9 9 0 1 1-3-6.700"/><path d="M21 2v5h-5"/></svg>
<div class="t" style="left:1776px;top:820px;font-size:13.500px;line-height:22px;font-weight:700;color:#f3f4f6">Refresh Preview</div>

<!-- scrollbar -->
<div class="a" style="left:1904px;top:104px;width:16px;height:766px;background:#fff"></div>
<svg class="a" style="left:1904px;top:109px" width="16" height="12" viewBox="0 0 16 12"><path d="M7 2l6 8H1z" fill="#6f6f6f"/></svg>
<div class="a" style="left:1908px;top:312px;width:11px;height:418px;background:#8b8b8b;border-radius:5px"></div>
<svg class="a" style="left:1904px;top:853px" width="16" height="12" viewBox="0 0 16 12"><path d="M7 10L1 2h12z" fill="#6f6f6f"/></svg>
</body>
</html>
